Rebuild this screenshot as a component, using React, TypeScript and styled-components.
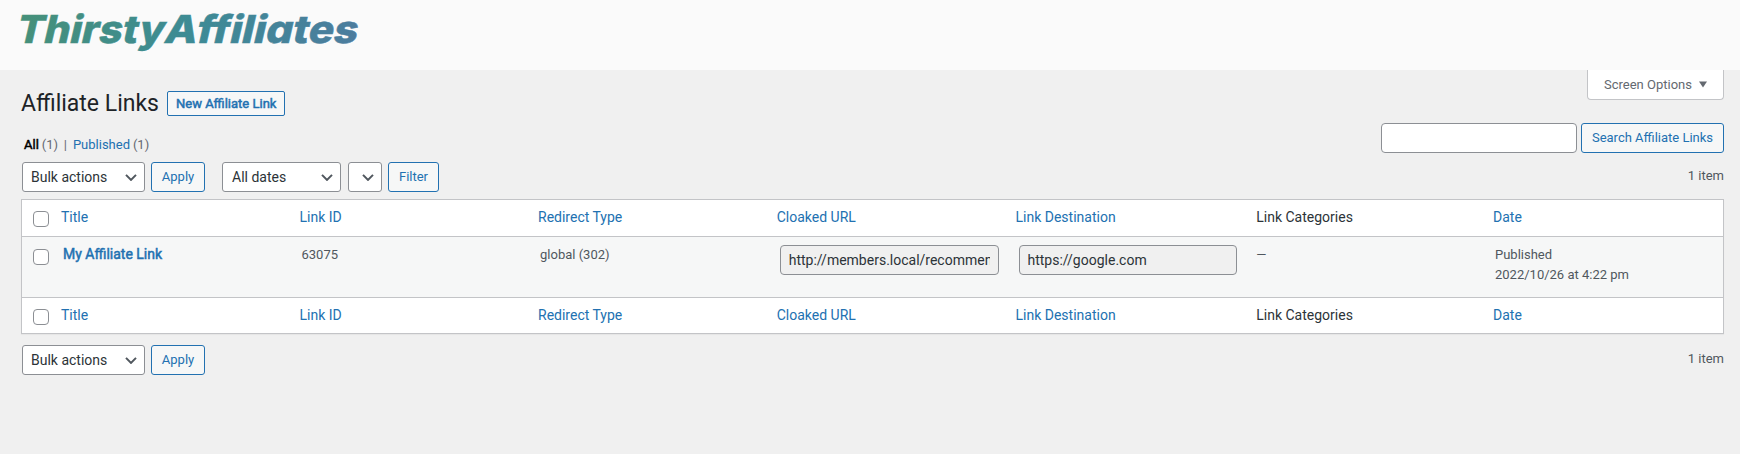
import React from "react";
import styled, { createGlobalStyle, css } from "styled-components";

const GlobalStyle = createGlobalStyle`
  *, *::before, *::after { box-sizing: border-box; }
  body {
    margin: 0;
    min-height: 100vh;
    background: #f0f0f0;
    color: #3c434a;
    font: 13px/18px Roboto, "Liberation Sans", sans-serif;
  }
`;

const emphasis = css`
  font-weight: 400;
  -webkit-text-stroke: 0.5px currentColor;
`;

const Brand = styled.header`
  height: 70px;
  background: #fafafa;
  padding: 10px 0 0 20px;
`;

const Logo = styled.svg`
  display: block;
  width: 360px;
  height: 56px;
  overflow: visible;
  font-family: Inter, sans-serif;
  font-weight: 800;
  font-size: 38.5px;
  font-feature-settings: "cv11";
`;

const Page = styled.main`
  padding: 0 16px 0 21px;
`;

const TitleBar = styled.div`
  display: flex;
  justify-content: space-between;
  align-items: flex-start;
  height: 53px;
`;

const Heading = styled.div`
  display: flex;
  align-items: flex-start;
  gap: 8px;
  padding-top: 18px;
`;

const PageTitle = styled.h1`
  margin: 0;
  font-size: 23px;
  font-weight: 400;
  line-height: 32px;
  color: #1d2327;
`;

const NewLink = styled.a`
  height: 25px;
  margin-top: 3px;
  padding: 0 8px;
  border: 1px solid #2271b1;
  border-radius: 2px;
  background: #f6f7f7;
  color: #2271b1;
  line-height: 23px;
  ${emphasis}
`;

const ScreenOptions = styled.button`
  display: flex;
  align-items: center;
  gap: 7px;
  width: 137px;
  height: 30px;
  padding: 0 0 0 16px;
  border: 1px solid #c3c4c7;
  border-top: 0;
  border-radius: 0 0 4px 4px;
  background: #fff;
  color: #646970;
  font: inherit;
`;

const FilterBar = styled.div`
  display: flex;
  justify-content: space-between;
  height: 39px;
`;

const Views = styled.nav`
  display: flex;
  align-items: center;
  padding: 5px 0 0 3px;
  white-space: pre;
  word-spacing: -0.3px;
  color: #646970;
`;

const ViewLink = styled.a<{ $current?: boolean }>`
  color: ${(p) => (p.$current ? "#000" : "#2271b1")};
  ${(p) => p.$current && emphasis}
`;

const Search = styled.form`
  display: flex;
  gap: 4px;
`;

const TextInput = styled.input<{ $width: string }>`
  display: block;
  width: ${(p) => p.$width};
  height: 30px;
  padding: 0 8px;
  border: 1px solid #8c8f94;
  border-radius: 4px;
  background: ${(p) => (p.readOnly ? "#f0f0f0" : "#fff")};
  color: #2c3338;
  font: 14px/28px Roboto, sans-serif;
`;

const Button = styled.button<{ $width: number }>`
  width: ${(p) => p.$width}px;
  height: 30px;
  padding: 0;
  border: 1px solid #2271b1;
  border-radius: 3px;
  background: #f6f7f7;
  color: #2271b1;
  font: 13px/28px Roboto, sans-serif;
  white-space: nowrap;
`;

const Toolbar = styled.div`
  display: flex;
  align-items: flex-start;
  gap: 6px;
  padding-left: 1px;
`;

const Picker = styled.div<{ $width: number }>`
  display: flex;
  align-items: center;
  justify-content: space-between;
  width: ${(p) => p.$width}px;
  height: 30px;
  padding: 0 7px 0 8px;
  border: 1px solid #8c8f94;
  border-radius: 3px;
  background: #fff;
  color: #2c3338;
  font-size: 14px;
`;

const DateFilters = styled.div`
  display: flex;
  gap: 6px;
  margin-left: 11px;

  & > :first-child { margin-right: 1px; padding-left: 9px; }
`;

const ItemCount = styled.span`
  margin: 5px 0 0 auto;
  color: #50575e;
`;

const Table = styled.div`
  margin: 7px 0 11px;
  border: 1px solid #c3c4c7;
  background: #fff;
  box-shadow: 0 1px 1px rgba(0, 0, 0, 0.04);
`;

const Row = styled.div<{ $height: number; $shaded?: boolean }>`
  display: grid;
  grid-template-columns: 31px repeat(2, 238.5px) repeat(4, 238.75px) minmax(0, 1fr);
  height: ${(p) => p.$height}px;
  background: ${(p) => (p.$shaded ? "#f6f7f7" : "#fff")};
  & + & { border-top: 1px solid #c3c4c7; }
`;

const HeadCell = styled.div<{ $plain?: boolean }>`
  padding: 7px ${(p) => (p.$plain ? 10 : 8)}px;
  color: ${(p) => (p.$plain ? "#2c3338" : "#2271b1")};
  font-size: 14px;
  line-height: 20px;
`;

const Cell = styled.div`
  padding: 8px 9px 8px 10px;
  color: #50575e;
  line-height: 20px;
`;

const RowTitle = styled.a`
  display: block;
  margin-top: -1px;
  color: #2271b1;
  font-size: 14px;
  ${emphasis}
`;

const UrlField = styled.div`
  padding: 8px 9px 0 11px;
`;

const Check = styled.input.attrs({ type: "checkbox" })<{ $top: number }>`
  appearance: none;
  width: 16px;
  height: 16px;
  margin: ${(p) => p.$top}px 0 0 11px;
  border: 1px solid #8c8f94;
  border-radius: 4px;
  background: #fff;
`;

const Chevron = () => (
  <svg width="12" height="8" viewBox="0 0 12 8" fill="none" stroke="#50575e" strokeWidth="2">
    <path d="M1 1.9 6 6.9 11 1.9" />
  </svg>
);

const columns = ["Title", "Link ID", "Redirect Type", "Cloaked URL", "Link Destination", "Link Categories", "Date"];

const Headings = ({ height }: { height: number }) => (
  <Row $height={height}>
    <Check $top={11} aria-label="Select all" />
    {columns.map((name) => (
      <HeadCell key={name} $plain={name === "Link Categories"}>{name}</HeadCell>
    ))}
  </Row>
);

const BulkActions = () => (
  <>
    <Picker $width={123}>Bulk actions<Chevron /></Picker>
    <Button $width={54}>Apply</Button>
  </>
);

export default function App() {
  return (
    <>
      <GlobalStyle />
      <Brand>
        <Logo role="img" aria-label="ThirstyAffiliates">
          <defs>
            <linearGradient id="brand" gradientUnits="userSpaceOnUse" x1="0" y1="0" x2="338" y2="0">
              <stop offset="0" stopColor="#45907a" />
              <stop offset="0.5" stopColor="#3d8b95" />
              <stop offset="1" stopColor="#4c7c9e" />
            </linearGradient>
          </defs>
          <g transform="translate(0 33) skewX(-13)" fill="url(#brand)" stroke="url(#brand)" strokeWidth="0.5">
            <text x="-5.5" y="0" textLength="148" lengthAdjust="spacingAndGlyphs">Thirsty</text>
            <text x="143" y="0" textLength="193" lengthAdjust="spacingAndGlyphs">Affiliates</text>
          </g>
        </Logo>
      </Brand>
      <Page>
        <TitleBar>
          <Heading>
            <PageTitle>Affiliate Links</PageTitle>
            <NewLink>New Affiliate Link</NewLink>
          </Heading>
          <ScreenOptions>
            Screen Options
            <svg width="8" height="7" viewBox="0 0 8 7"><path d="M0 0.5H8L4 6.5Z" fill="#646970" /></svg>
          </ScreenOptions>
        </TitleBar>
        <FilterBar>
          <Views>
            <ViewLink $current>All</ViewLink> (1)  |  <ViewLink>Published</ViewLink> (1)
          </Views>
          <Search>
            <TextInput $width="196px" aria-label="Search" />
            <Button type="button" $width={143}>Search Affiliate Links</Button>
          </Search>
        </FilterBar>
        <Toolbar>
          <BulkActions />
          <DateFilters>
            <Picker $width={119}>All dates<Chevron /></Picker>
            <Picker $width={34}><span /><Chevron /></Picker>
            <Button $width={51}>Filter</Button>
          </DateFilters>
          <ItemCount>1 item</ItemCount>
        </Toolbar>
        <Table>
          <Headings height={36} />
          <Row $height={61} $shaded>
            <Check $top={12} aria-label="Select My Affiliate Link" />
            <Cell><RowTitle>My Affiliate Link</RowTitle></Cell>
            <Cell>63075</Cell>
            <Cell>global (302)</Cell>
            <UrlField><TextInput $width="100%" readOnly value="http://members.local/recommends/my-affiliate-link/" /></UrlField>
            <UrlField><TextInput $width="100%" readOnly value="https://google.com" /></UrlField>
            <Cell>—</Cell>
            <Cell>Published<br />2022/10/26 at 4:22 pm</Cell>
          </Row>
          <Headings height={36} />
        </Table>
        <Toolbar>
          <BulkActions />
          <ItemCount>1 item</ItemCount>
        </Toolbar>
      </Page>
    </>
  );
}
